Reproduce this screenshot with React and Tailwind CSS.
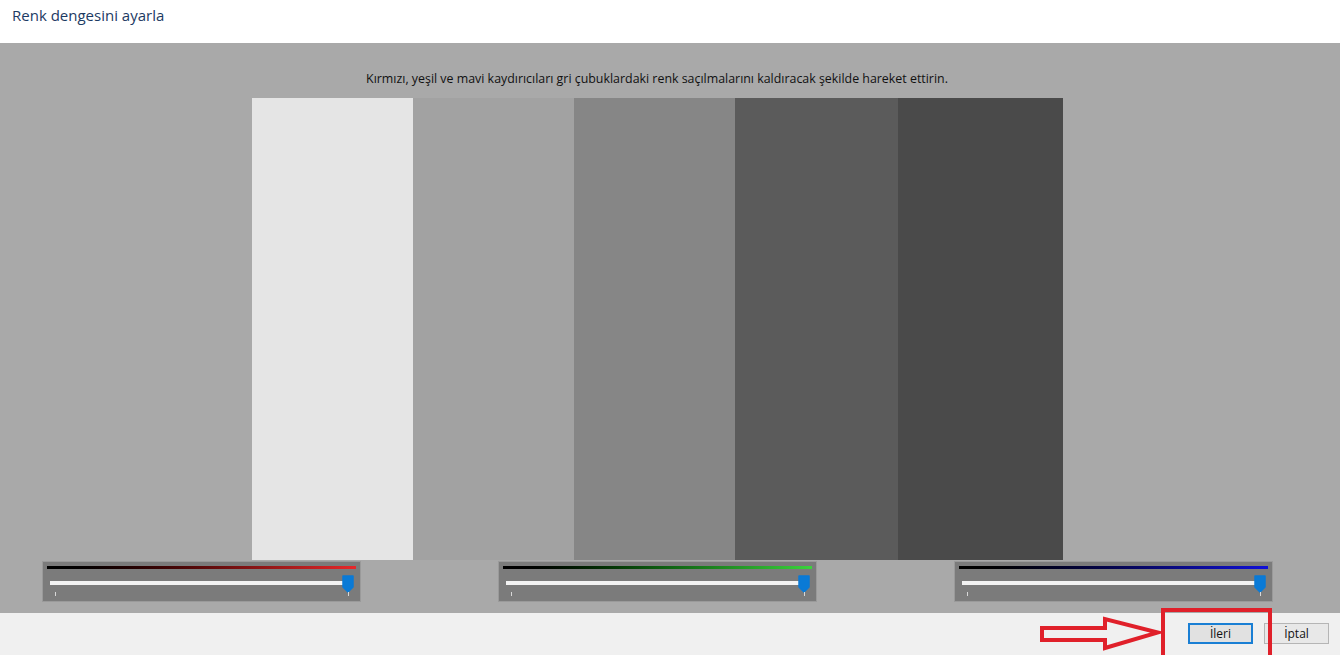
import React from "react";

const font = { fontFamily: '"Open Sans", "Noto Sans", "Liberation Sans", sans-serif' };

function Slider({ gradient }) {
  return (
    <div className="w-[319px] h-[41px] bg-[#7b7b7b] border border-[#9a9a9a] flex flex-col px-[4px] pt-[4px]">
      <div className={`h-[3px] w-full ${gradient}`} />
      <div className="relative mt-[9px] h-[20px]">
        <div className="absolute left-[3px] right-[9px] top-[3px] h-[4px] bg-[#f2f2f2]" />
        <svg className="absolute right-[2px] top-[-3px]" width="12" height="18" viewBox="0 0 12 18">
          <path d="M1 1 H11 V12 L6 17 L1 12 Z" fill="#0a7ad6" stroke="#0a7ad6" strokeLinejoin="round" strokeWidth="1.5" />
        </svg>
        <div className="absolute left-[8px] top-[14px] w-[1px] h-[4px] bg-[#d8d8d8]" />
        <div className="absolute right-[7px] top-[14px] w-[1px] h-[4px] bg-[#d8d8d8]" />
      </div>
    </div>
  );
}

export default function App() {
  return (
    <div className="w-[1340px] h-[655px] flex flex-col overflow-hidden bg-white" style={font}>
      <div className="h-[43px] bg-white flex items-start pl-[12px] pt-[5px]">
        <span className="text-[15px] leading-[20px] text-[#1c3a63]">Renk dengesini ayarla</span>
      </div>
      <div className="h-[570px] bg-[#a9a9a9] flex flex-col">
        <div className="mt-[27px] h-[18px] flex justify-center pr-[26px]">
          <span className="text-[12.4px] leading-[18px] text-[#111]">
            Kırmızı, yeşil ve mavi kaydırıcıları gri çubuklardaki renk saçılmalarını kaldıracak şekilde hareket ettirin.
          </span>
        </div>
        <div className="mt-[10px] ml-[252px] flex h-[462px]">
          <div className="w-[161px] bg-[#e5e5e5]" />
          <div className="w-[161px] bg-[#a2a2a2]" />
          <div className="w-[161px] bg-[#868686]" />
          <div className="w-[163px] bg-[#5b5b5b]" />
          <div className="w-[165px] bg-[#4a4a4a]" />
        </div>
        <div className="mt-[1px] pl-[42px] flex gap-[137px]">
          <Slider gradient="bg-gradient-to-r from-black via-[#5a0a0a] to-[#e8282a]" />
          <Slider gradient="bg-gradient-to-r from-black via-[#0c5a10] to-[#3ad43c]" />
          <Slider gradient="bg-gradient-to-r from-black via-[#05054e] to-[#1010d8]" />
        </div>
      </div>
      <div className="relative flex-1 bg-[#f0f0f0] flex items-start justify-end pt-[10px] pr-[11px] gap-[11px]">
        <button className="w-[65px] h-[21px] bg-[#e1e1e1] border-2 border-[#1a7fd4] text-[12px] leading-none text-[#111]">
          İleri
        </button>
        <button className="w-[65px] h-[21px] bg-[#e8e8e8] border border-[#b5b5b5] text-[12px] leading-none text-[#111]">
          İptal
        </button>
        <div className="absolute left-[1161px] top-[-5px] w-[111px] h-[52px] border-[4px] border-[#e0202a]" />
        <svg className="absolute left-[1039px] top-[2px]" width="124" height="38" viewBox="0 0 124 38">
          <path d="M3 13 H66 V4 L119 17.5 L66 33 V25 H3 Z" fill="none" stroke="#e0202a" strokeWidth="4" strokeLinejoin="miter" />
        </svg>
      </div>
    </div>
  );
}
